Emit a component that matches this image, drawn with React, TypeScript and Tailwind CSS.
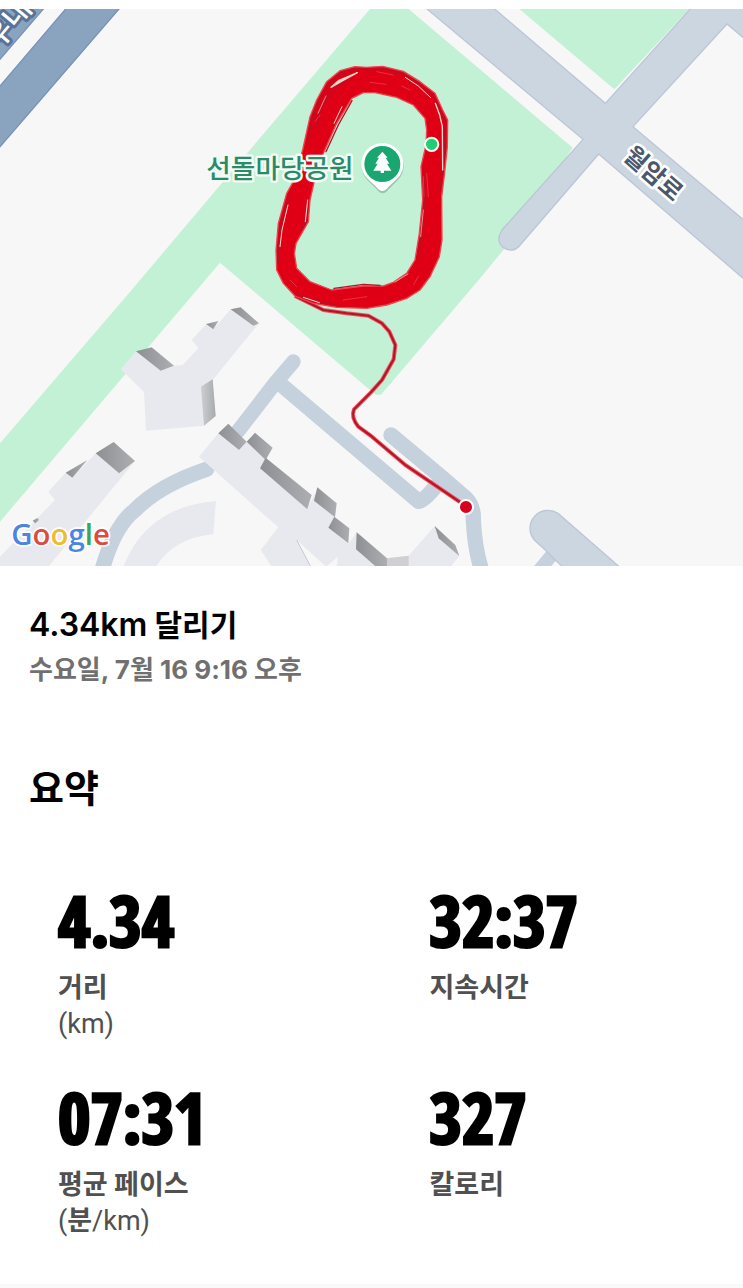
import type { ReactNode } from "react"

interface IStat {
  value: string
  label: string
  unit?: ReactNode
}

const stats: IStat[] = [
  { value: "4.34", label: "거리", unit: "(km)" },
  { value: "32:37", label: "지속시간" },
  { value: "07:31", label: "평균 페이스", unit: <>(<span className="font-bold">분</span>/km)</> },
  { value: "327", label: "칼로리" },
]

const OUTER = "M285 50 L320 52 L368 49 L430 64 L480 95 L525 130 L548 180 L563 210 L562 290 L553 375 L545 440 L546 570 L538 620 L510 680 L480 720 L440 745 L380 765 L320 775 L230 772 L160 760 L105 738 L70 700 L50 660 L48 600 L55 520 L80 430 L100 395 L128 300 L150 200 L170 150 L200 95 L240 62Z"
const INNER = "M310 128 L345 128 L410 142 L460 165 L495 205 L500 240 L498 285 L483 350 L488 450 L478 550 L465 630 L440 670 L400 697 L370 708 L310 708 L215 720 L150 695 L110 655 L103 610 L108 580 L145 515 L150 450 L165 385 L190 310 L230 220 L275 145Z"
const EXIT = "M885 888 L970 930 L1040 940 L1105 947 L1146 970 L1168 995 L1186 1035 L1181 1078 L1146 1140 L1112 1178 L1062 1228 Q1052 1252 1075 1280 L1116 1310 L1216 1395 L1390 1513"

function Buildings() {
  return (
    <g transform="translate(0 840)">
      <g fill="#e8e9ef">
        <path d="M362 268 L408 214 L482 272 L522 257 L548 255 L595 205 L575 180 L618 133 L640 148 L692 88 L775 132 L638 300 L647 408 L612 437 L438 452 L432 335Z" />
        <path d="M145 635 L197 578 L217 593 L287 520 L355 580 L405 543 L145 860 H0 V830 L165 660Z" />
        <path d="M370 860 Q440 680 648 663 L640 762 Q520 775 468 860Z" />
        <path d="M597 530 L655 460 L717 510 L740 485 L797 538 L780 565 L922 688 L945 640 L1003 715 L985 743 L1045 792 L1070 757 L1161 835 L1226 827 L1304 738 L1378 828 L1352 860 H1010 L1014 830 L978 860 L890 780 L932 860 H815 L782 810 L835 742Z" />
      </g>
      <g fill="url(#roof)">
        <path d="M408 214 L455 202 L522 257 L482 272Z" />
        <path d="M692 88 L722 82 L777 130 L760 137Z" />
        <path d="M618 132 L655 123 L640 148Z" />
        <path d="M287 520 L341 486 L405 543 L357 580Z" />
        <path d="M197 578 L262 540 L217 593Z" />
        <path d="M655 460 L685 431 L740 485 L717 510Z" />
        <path d="M740 485 L765 458 L818 503 L797 540Z" />
        <path d="M780 565 L797 533 L935 645 L922 688Z" />
        <path d="M942 662 L952 622 L1010 670 L1005 712Z" />
        <path d="M985 743 L1003 710 L1048 745 L1045 790Z" />
        <path d="M1068 808 L1070 757 L1161 835 V860 H1128Z" />
        <path d="M1304 738 L1366 795 L1378 828 L1316 775Z" />
        <path d="M98 722 L112 714 L117 720 L106 730Z" />
      </g>
      <path d="M603 320 L638 298 L647 408 L612 437Z" fill="url(#wall)" />
      <path d="M1161 835 L1226 827 V860 H1161Z" fill="#d0d0d3" />
      <path d="M890 780 L932 860" stroke="#b4b5ba" strokeWidth="2" />
    </g>
  )
}

function Track() {
  return (
    <>
      <path d={EXIT} fill="none" stroke="#f2505c" strokeWidth="12" strokeLinejoin="round" />
      <path d={EXIT} fill="none" stroke="#b01428" strokeWidth="6" strokeLinejoin="round" />
      <g transform="translate(780 150)" fill="none" strokeLinejoin="round" strokeLinecap="round">
        <path d={OUTER + INNER} fill="#df0016" fillRule="evenodd" stroke="#ee4450" strokeWidth="4" />
        <g stroke="#b01428" strokeWidth="4">
          <path d="M141 280 L158 205 L178 150 L208 102 L242 70 L286 56 L330 60 L368 56 L426 71 L474 101 L517 135 L541 185 L556 214 L555 290 L547 375 L540 420" />
          <path d="M167 235 L180 180 L215 125 L262 88" />
          <path d="M55 640 L55 600 L63 525 L88 435" />
          <path d="M198 305 L235 225 L276 152" />
          <path d="M142 510 L128 535 L145 450" />
          <path d="M490 350 L495 450 L485 550 L471 625" />
          <path d="M110 731 L165 752 L225 763" />
          <path d="M222 715 L310 703 L360 706" />
        </g>
        <g stroke="#efd9cb" strokeWidth="4">
          <path d="M213 112 L235 92 L292 68 L248 92Z" fill="#efd9cb" />
          <path d="M526 160 L539 195 L547 230 L548 360" />
          <path d="M436 82 L475 108 L512 143" strokeWidth="3" />
          <path d="M60 590 L66 540 L84 465" strokeWidth="3" />
          <path d="M174 190 L198 138" strokeWidth="2" />
          <path d="M222 220 L246 170" strokeWidth="3" />
          <path d="M136 515 L143 450" strokeWidth="3" />
          <path d="M490 480 L482 560" strokeWidth="2" />
          <path d="M405 696 L444 672" strokeWidth="2" />
          <path d="M130 742 L178 758" strokeWidth="3" />
        </g>
        <g stroke="#ea4a55" strokeWidth="2">
          <path d="M165 215 L180 195 M330 97 L378 103 M350 65 L400 75 M425 108 L450 120 M490 380 L492 440 M250 750 L320 740 M500 370 L505 440 M460 705 L475 680 M90 690 L110 710" />
        </g>
      </g>
    </>
  )
}

function ParkPin() {
  return (
    <g transform="translate(1147 492)">
      <path d="M0 84 Q-9 84 -18 72 L-46 44 A63 63 0 1 1 46 44 L18 72 Q9 84 0 84Z" fill="#6b8f7d" opacity="0.45" transform="translate(1 4)" />
      <path d="M0 81 Q-9 81 -18 69 L-46 43 A63 63 0 1 1 46 43 L18 69 Q9 81 0 81Z" fill="#fff" />
      <circle r="54" fill="#1aa670" />
      <path d="M0 -37 L16 -19 L10 -19 L21 -1 L14 -1 L27 20 H5 V27 H-5 V20 H-27 L-14 -1 L-21 -1 L-10 -19 L-16 -19Z" fill="#fff" />
    </g>
  )
}

// map units are 3 per css pixel at the base width
function RouteMap() {
  return (
    <svg viewBox="0 27 2229 1671" className="block w-full" role="img" aria-label="달리기 경로 지도">
      <defs>
        <linearGradient id="roof">
          <stop offset="0" stopColor="#8e8f92" />
          <stop offset="1" stopColor="#adaeb1" />
        </linearGradient>
        <linearGradient id="wall">
          <stop offset="0" stopColor="#cdced2" />
          <stop offset="1" stopColor="#a9aaae" />
        </linearGradient>
      </defs>
      <rect y="27" width="2229" height="1671" fill="#f7f7f7" />
      <g fill="#c3f1d5">
        <path d="M1110 27 L745 455 L395 870 L0 1330 V1565 L660 788 L1100 1162 L1128 1184 H1143 L1436 840 L1510 750 L1718 443 L1226 27Z" />
        <path d="M1558 27 H2068 L1843 268Z" />
      </g>

      <g fill="#8aa4c0" stroke="#7891b8" strokeWidth="4">
        <path d="M203 20 H363 L-6 447 V265Z" />
        <path d="M-6 20 H136 L-6 185Z" />
      </g>
      <path d="M165 27 L633 418 L390 690 Q370 722 393 742 Q425 762 447 732 L680 462 L1125 845 V668 L783 380 L1065 72 L1125 122 V20 H961 L700 310 L360 20 H157Z" transform="translate(1116 0)" fill="#ccd6e0" stroke="#bcc6d6" strokeWidth="4" />

      <g transform="translate(0 840)" fill="none" stroke="#c5d1dd" strokeLinecap="round" strokeLinejoin="round">
        <path d="M302 885 Q340 740 405 690 Q480 615 620 568" strokeWidth="46" />
        <path d="M715 452 L825 310 L880 245" strokeWidth="44" />
        <path d="M848 318 L1256 664 Q1275 660 1310 615" strokeWidth="46" />
        <path d="M1173 465 L1331 597 L1398 655 Q1422 680 1420 720 Q1424 810 1448 880" strokeWidth="46" />
        <path d="M1660 820 L1610 880" strokeWidth="40" />
      </g>
      <path d="M1636 1650 L1603 1620 A54 54 0 0 1 1674 1540 L1862 1704 H1690Z" fill="#ccd6e0" stroke="#bcc6d6" strokeWidth="4" />
      <path d="M1668 1685 L1654 1698 H1682Z" fill="#f7f7f7" />

      <Buildings />
      <Track />

      <g fontFamily="'Noto Sans CJK KR', sans-serif" paintOrder="stroke" strokeLinejoin="round">
        <text x="619" y="534" fontSize="80" fontWeight="500" fill="#2a8b68" stroke="#f3fbf6" strokeWidth="14">선돌마당공원</text>
        <text transform="translate(1961 520) rotate(41)" y="27" textAnchor="middle" fontSize="74" fontWeight="700" fill="#4b586b" stroke="#fff" strokeWidth="16">월암로</text>
        <text transform="translate(0 146) rotate(-50)" x="-8" fontSize="88" fontWeight="500" fill="#fff" stroke="#5a7397" strokeWidth="18">우내</text>
      </g>

      <ParkPin />
      <circle cx="1295" cy="433" r="20" fill="#1fce70" stroke="#fff" strokeWidth="6" />
      <circle cx="1398" cy="1521" r="21" fill="#d8001c" stroke="#fff" strokeWidth="6" />

      <text x="34" y="1635" fontFamily="'Open Sans', sans-serif" fontSize="88" fontWeight="600" paintOrder="stroke" stroke="#fff" strokeWidth="10" strokeLinejoin="round">
        <tspan fill="#4a84e4">G</tspan>
        <tspan fill="#dc4b41">o</tspan>
        <tspan fill="#eebc30">o</tspan>
        <tspan fill="#4a84e4">g</tspan>
        <tspan fill="#3da556">l</tspan>
        <tspan fill="#dc4b41">e</tspan>
      </text>
    </svg>
  )
}

function Stat({ value, label, unit }: IStat) {
  return (
    <div className="h-[197px] pl-[58px]">
      <dd className="font-['Open_Sans_Condensed','Roboto_Condensed',sans-serif] text-[70px] leading-[76px] font-extrabold text-black [-webkit-text-stroke:3px_black]">{value}</dd>
      <dt className="mt-3 text-[27px] leading-9 font-bold text-[#505050]">
        {label}
        {unit && <span className="block font-[Roboto,'Noto_Sans_CJK_KR',sans-serif] font-normal">{unit}</span>}
      </dt>
    </div>
  )
}

export default function App() {
  return (
    <main className="w-full border-b-4 border-[#f9f9f9] bg-white pt-[9px] font-[Inter,'Noto_Sans_CJK_KR',sans-serif]">
      <RouteMap />
      <header className="px-[29px] pt-9">
        <h1 className="text-[30px] leading-[46px] font-bold text-black">
          <span className="text-[32px] font-semibold">4.34km</span> 달리기
        </h1>
        <p className="text-[26px] leading-[44px] font-bold text-[#707070]">수요일, 7월 16 9:16 오후</p>
      </header>
      <section className="pt-[68px]">
        <h2 className="px-[29px] text-[38px] leading-[56px] font-bold text-black">요약</h2>
        <dl className="grid grid-cols-2 pt-[66px] pb-2">
          {stats.map((stat) => (
            <Stat key={stat.label} {...stat} />
          ))}
        </dl>
      </section>
    </main>
  )
}
